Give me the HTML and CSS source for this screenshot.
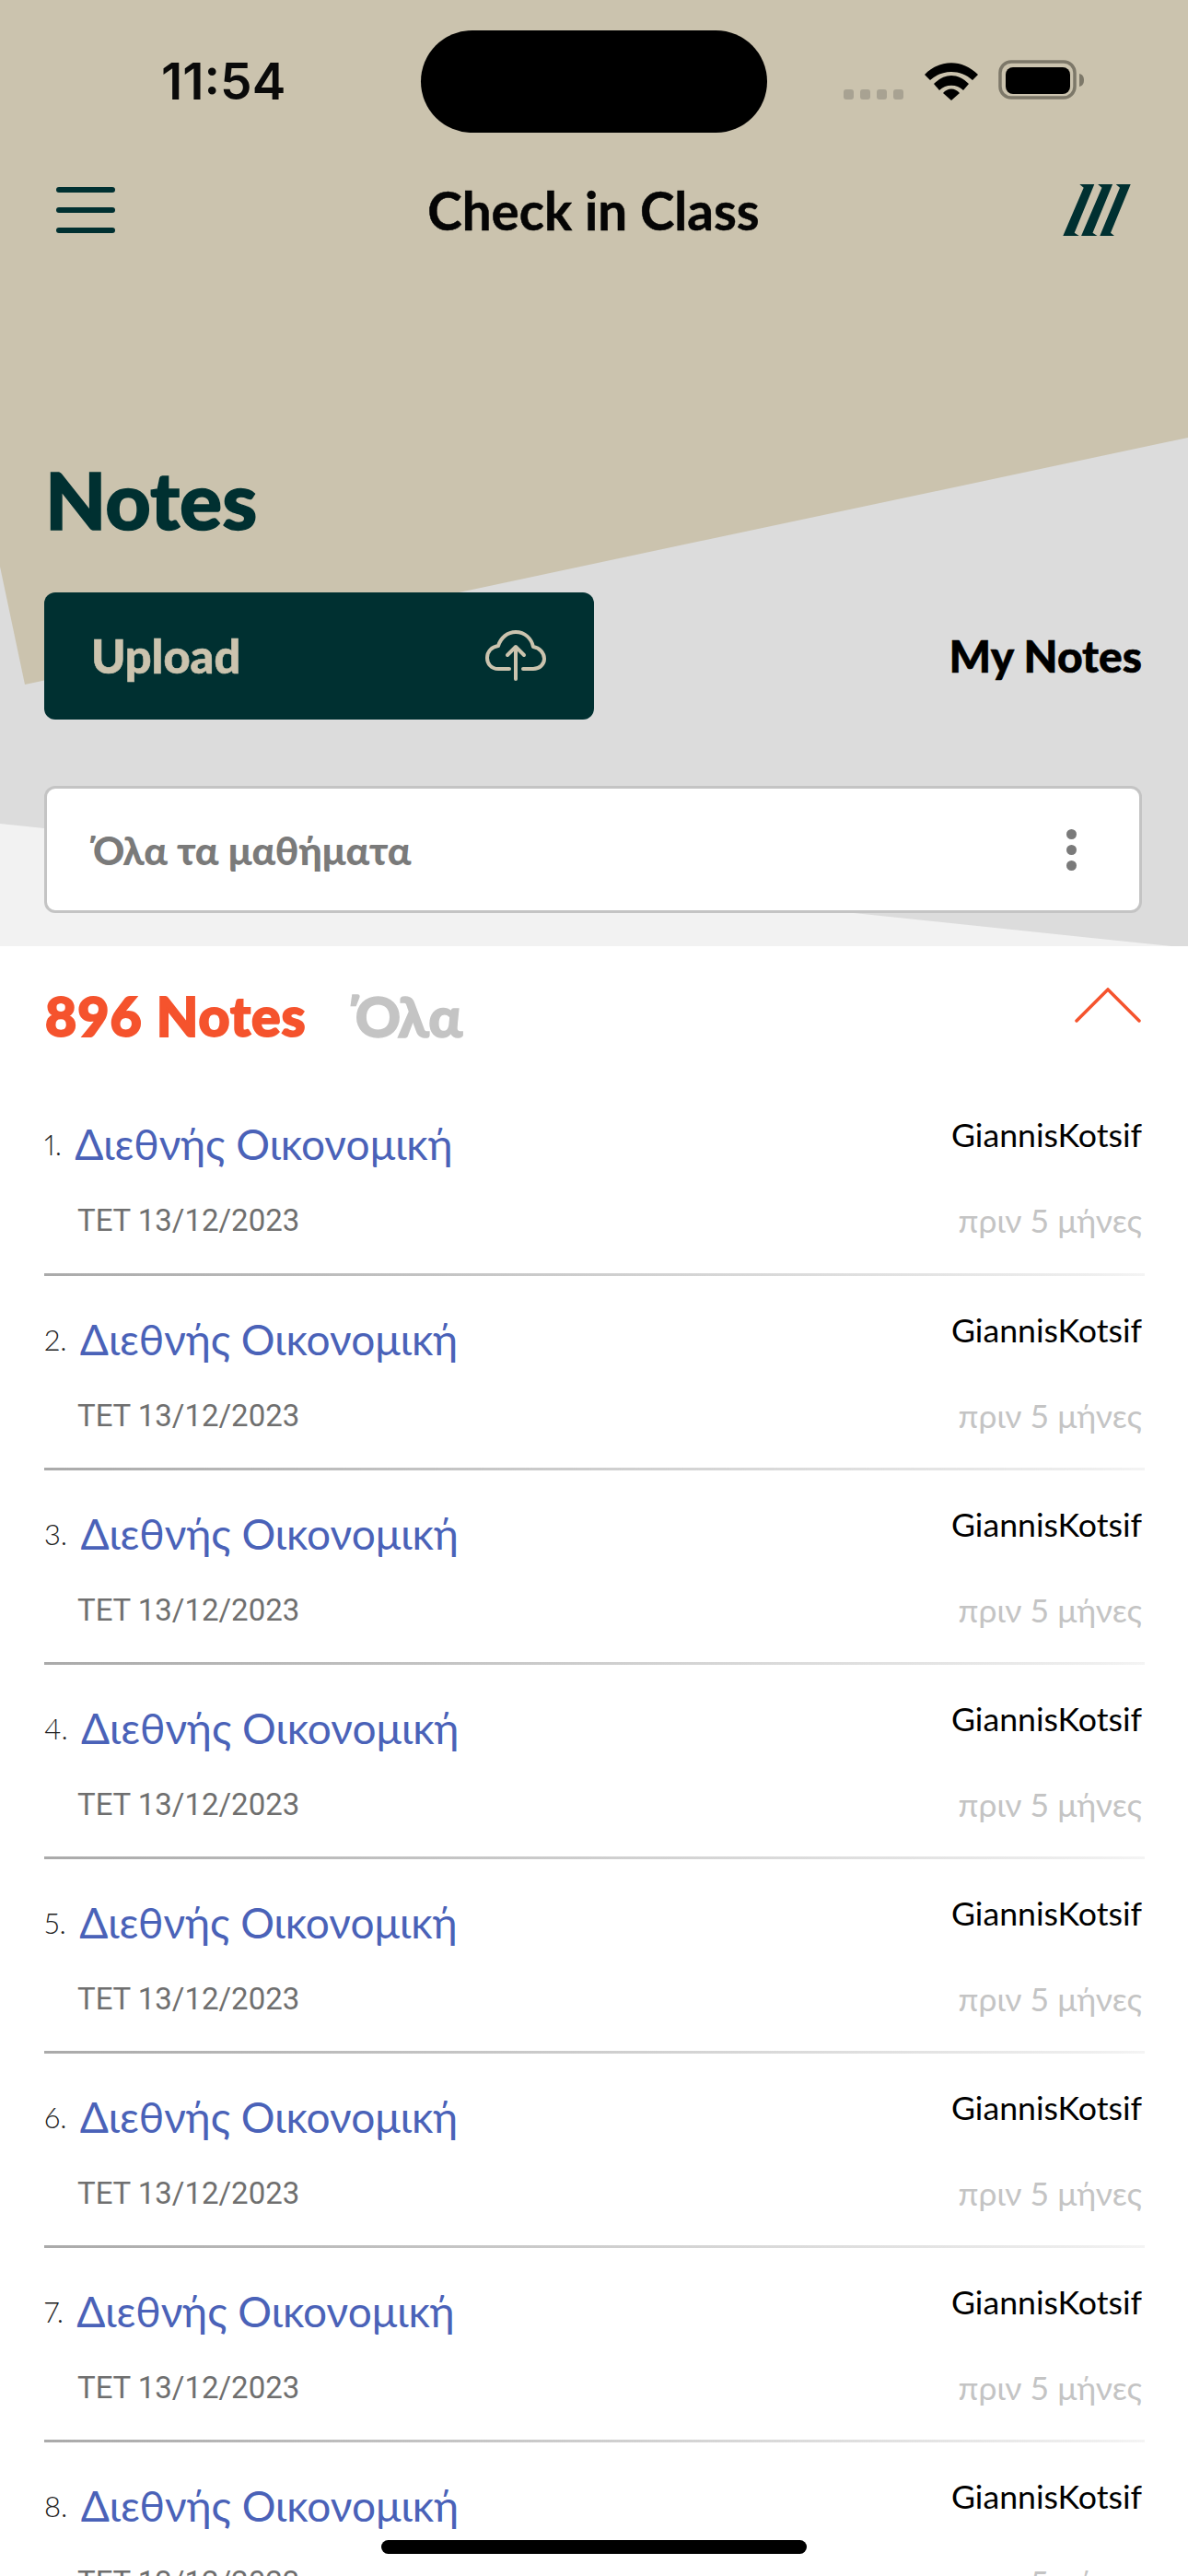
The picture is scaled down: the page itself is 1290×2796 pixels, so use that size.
FILE: index.html
```html
<!DOCTYPE html>
<html lang="el">
<head>
<meta charset="utf-8">
<title>Check in Class</title>
<link rel="stylesheet" href="styles.css">
</head>
<body>
<div class="screen">
  <header class="top">
    <div class="status">
      <span class="time">11:54</span>
      <span class="island"></span>
      <div class="status-icons">
        <span class="signal"><i></i><i></i><i></i><i></i></span>
        <svg class="wifi" width="58" height="42" viewBox="0 0 58 42"><path d="M0 14 L6 20 C19 8 39 8 52 20 L58 14 C41 -3 17 -3 0 14Z M10 24 L16 31 C23 24 35 24 42 31 L48 24 C36 12 22 12 10 24Z M20 34 L29 42 L38 34 C33 28 25 28 20 34Z"/></svg>
        <svg class="battery" width="94" height="44" viewBox="0 0 94 44"><rect x="2" y="2" width="81" height="39" rx="12" fill="none" stroke="#7d7869" stroke-width="3.5"/><rect x="8" y="8" width="70" height="29" rx="8"/><path d="M88 15 C92 16 93 19 93 22 C93 25 92 28 88 29Z" fill="#7d7869"/></svg>
      </div>
    </div>
    <div class="navbar">
      <button class="burger" aria-label="Menu"><i></i><i></i><i></i></button>
      <h2 class="brand-title">Check in Class</h2>
      <svg class="logo" width="74" height="56" viewBox="9 9 74 56"><path d="M27.3 9 H43.3 L21.7 61.7 L26.7 65 H9.3 L31.7 12.7Z M47.1 9 H63.1 L41.5 61.7 L46.5 65 H29.1 L51.5 12.7Z M66.7 9 H82.7 L61 61.7 L65 65 H49.3 L71 12.7Z"/></svg>
    </div>
    <h1 class="page-title">Notes</h1>
    <div class="actions">
      <button class="upload">
        <span>Upload</span>
        <svg width="66" height="56" viewBox="0 0 66 56" fill="none" stroke="#cbc3ae" stroke-width="4" stroke-linecap="round" stroke-linejoin="round"><path d="M26 42 H14 C6 42 2 36 2 30 C2 23 7 18 14 17 C17 8 24 2 33 2 C43 2 50 9 52 18 C59 19 64 25 64 31 C64 37 59 42 52 42 H41"/><path d="M33 53 V18 M24 27 L33 18 L42 27"/></svg>
      </button>
      <a class="my-notes">My Notes</a>
    </div>
    <div class="select">
      <span>Όλα τα μαθήματα</span>
      <span class="dots"><i></i><i></i><i></i></span>
    </div>
  </header>

  <main class="notes">
    <div class="notes-head">
      <span class="count">896 Notes</span>
      <span class="filter">Όλα</span>
      <svg class="chevron" width="72" height="38" viewBox="0 0 72 38" fill="none" stroke="#f5532d" stroke-width="3.5" stroke-linecap="round"><path d="M2 36 L36 2 L70 36"/></svg>
    </div>
    <ul class="list">
      <li class="row"><div class="line"><span class="name"><small>1.</small> Διεθνής Οικονομική</span><span class="user">GiannisKotsif</span></div><div class="line sub"><span class="date">ΤΕΤ 13/12/2023</span><span class="ago">πριν 5 μήνες</span></div></li>
      <li class="row"><div class="line"><span class="name"><small>2.</small> Διεθνής Οικονομική</span><span class="user">GiannisKotsif</span></div><div class="line sub"><span class="date">ΤΕΤ 13/12/2023</span><span class="ago">πριν 5 μήνες</span></div></li>
      <li class="row"><div class="line"><span class="name"><small>3.</small> Διεθνής Οικονομική</span><span class="user">GiannisKotsif</span></div><div class="line sub"><span class="date">ΤΕΤ 13/12/2023</span><span class="ago">πριν 5 μήνες</span></div></li>
      <li class="row"><div class="line"><span class="name"><small>4.</small> Διεθνής Οικονομική</span><span class="user">GiannisKotsif</span></div><div class="line sub"><span class="date">ΤΕΤ 13/12/2023</span><span class="ago">πριν 5 μήνες</span></div></li>
      <li class="row"><div class="line"><span class="name"><small>5.</small> Διεθνής Οικονομική</span><span class="user">GiannisKotsif</span></div><div class="line sub"><span class="date">ΤΕΤ 13/12/2023</span><span class="ago">πριν 5 μήνες</span></div></li>
      <li class="row"><div class="line"><span class="name"><small>6.</small> Διεθνής Οικονομική</span><span class="user">GiannisKotsif</span></div><div class="line sub"><span class="date">ΤΕΤ 13/12/2023</span><span class="ago">πριν 5 μήνες</span></div></li>
      <li class="row"><div class="line"><span class="name"><small>7.</small> Διεθνής Οικονομική</span><span class="user">GiannisKotsif</span></div><div class="line sub"><span class="date">ΤΕΤ 13/12/2023</span><span class="ago">πριν 5 μήνες</span></div></li>
      <li class="row"><div class="line"><span class="name"><small>8.</small> Διεθνής Οικονομική</span><span class="user">GiannisKotsif</span></div><div class="line sub"><span class="date">ΤΕΤ 13/12/2023</span><span class="ago">πριν 5 μήνες</span></div></li>
    </ul>
  </main>
  <div class="home-bar"></div>
</div>
</body>
</html>
```

FILE: styles.css
```css
* { box-sizing: border-box; }
html, body { margin: 0; padding: 0; }
body { background: #fff; font-family: Lato, "Noto Sans", sans-serif; }

.screen { position: relative; width: 1290px; height: 2796px; overflow: hidden; }

/* Header with its angled colour panels */
.top { position: relative; height: 1027px; background: #f2f2f2; padding: 0 50px 0 48px; }
.top::before, .top::after { content: ""; position: absolute; inset: 0; }
.top::before { background: #dcdcdc; clip-path: polygon(0 0, 1290px 0, 1290px 1029px, 0 894px); }
.top::after { background: #cbc3ae; clip-path: polygon(0 0, 1290px 0, 1290px 475px, 27px 743px, 0 615px); }
.top > * { position: relative; z-index: 1; }

/* Status bar */
.status { display: flex; align-items: flex-start; height: 172px; padding-top: 33px; margin: 0 -2px 0 -48px; }
.time { width: 457px; padding: 23px 0 0 175px; font: 600 55px/64px Inter, sans-serif; color: #0a0a0a; }
.island { width: 376px; height: 111px; border-radius: 56px; background: #000; }
.status-icons { display: flex; align-items: flex-end; padding: 32px 0 0 83px; }
.signal { display: flex; gap: 7px; margin-bottom: 1px; }
.signal i { width: 11px; height: 11px; border-radius: 3px; background: #a8a292; }
.wifi { margin: 0 0 0 23px; }
.battery { margin: 0 0 0 22px; }

/* Navigation row: the title stays on the page's centre line */
.navbar { display: grid; grid-template-columns: 1fr auto 1fr; align-items: center; height: 112px; margin: 0 12px 0 13px; }
.burger { display: flex; flex-direction: column; gap: 16px; width: 64px; padding: 0; border: 0; background: none; }
.burger i { height: 6px; border-radius: 3px; background: #003031; }
.brand-title { margin: 0; font-size: 56.5px; line-height: 64px; font-weight: 700; color: #050505; -webkit-text-stroke: 0.5px #050505; }
.logo { fill: #003031; justify-self: end; }

/* Title and actions */
.page-title { margin: 208px 0 0 1px; height: 100px; font-size: 86px; line-height: 100px; font-weight: 900; color: #003031; -webkit-text-stroke: 1.5px #003031; }
.actions { display: flex; align-items: center; justify-content: space-between; margin-top: 51px; }
.upload { display: flex; align-items: center; justify-content: space-between; width: 597px; height: 138px; padding: 0 52px 0 51px; border: 0; border-radius: 12px; background: #003031; color: #cbc3ae; font: 900 50.5px/58px Lato, sans-serif; -webkit-text-stroke: 0.6px #cbc3ae; }
.my-notes { font-size: 48px; line-height: 60px; font-weight: 900; color: #000; -webkit-text-stroke: 0.6px #000; }
.select { display: flex; align-items: center; justify-content: space-between; height: 138px; margin-top: 72px; padding: 0 68px 0 50px; border: 3px solid #c4c4c4; border-radius: 12px; background: #fff; font-size: 42.4px; font-weight: 900; color: #7a7a7a; }
.dots { display: flex; flex-direction: column; gap: 6px; }
.dots i { width: 11px; height: 11px; border-radius: 50%; background: #7a7a7a; }

/* Notes list */
.notes { padding: 0 50px 0 48px; }
.notes-head { display: flex; align-items: center; height: 90px; padding-top: 60px; margin-left: 1px; }
.count { font-size: 59px; font-weight: 900; letter-spacing: 1px; color: #f5532d; -webkit-text-stroke: 2px #f5532d; }
.filter { margin-left: 53px; font-size: 61px; font-weight: 900; color: #c4c4c4; -webkit-text-stroke: 1.5px #c4c4c4; }
.chevron { margin-left: auto; margin-bottom: 22px; margin-right: 1px; }
.list { margin: 0; padding: 0; list-style: none; }
.row { position: relative; height: 211px; padding-top: 39px; }
.row::after { content: ""; position: absolute; left: 0; right: -3px; bottom: 0; height: 3px; background: linear-gradient(90deg, #aaa, #eee 95%, #f4f4f4); }
.row:first-child { height: 268px; padding-top: 95px; }
.line { display: flex; justify-content: space-between; align-items: flex-start; }
.name { font-size: 46px; line-height: 60px; color: #4a62b8; }
.name small { position: relative; top: -5px; font-size: 31px; font-weight: 300; color: #222; font-variant-numeric: proportional-nums; margin-right: 4px; }
.user { margin-top: -2px; font-size: 35.7px; line-height: 44px; color: #000; }
.sub { margin-top: 26px; padding-left: 36px; }
.date { font: 400 33px/44px Roboto, sans-serif; color: #6f6f6f; }
.ago { font-size: 35.5px; line-height: 44px; color: #c4c4c4; }

.home-bar { position: absolute; left: 414px; top: 2757px; width: 462px; height: 15px; border-radius: 8px; background: #000; }
```
